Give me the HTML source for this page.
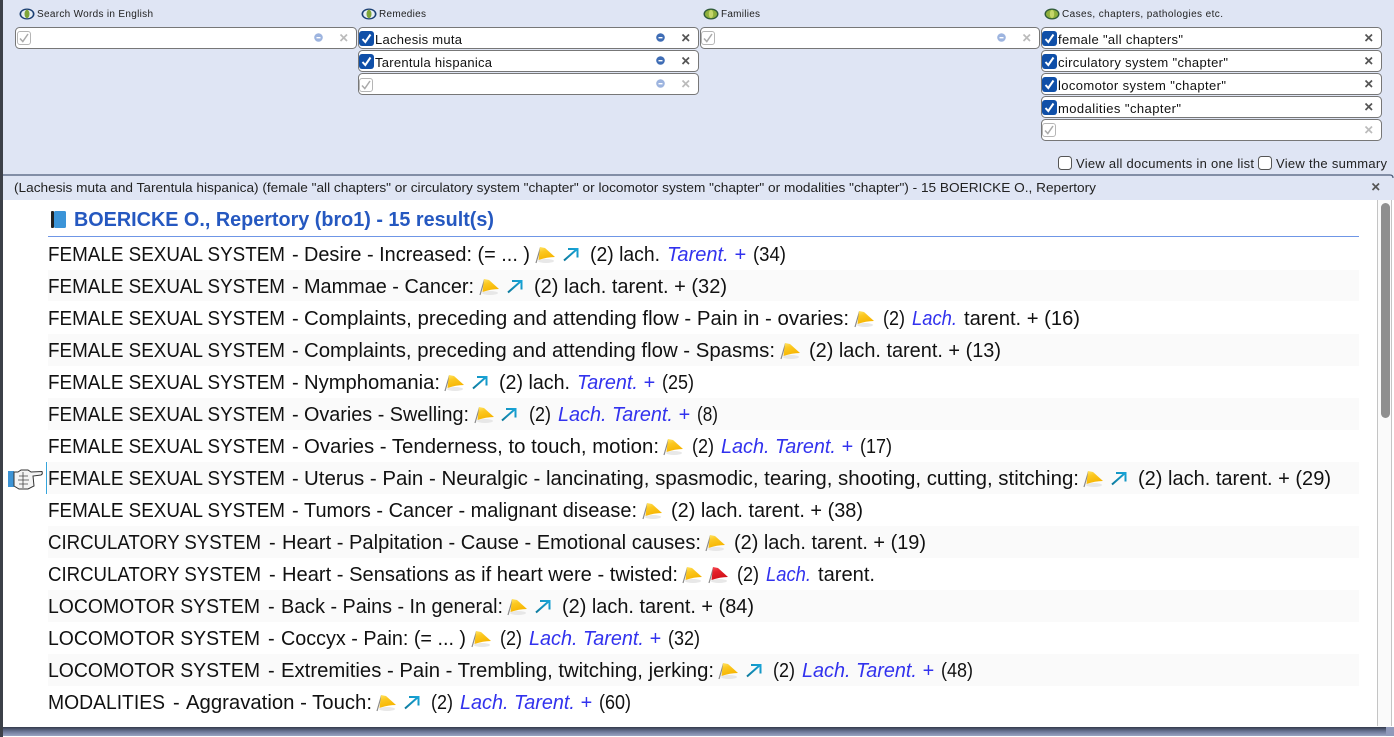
<!DOCTYPE html>
<html><head><meta charset="utf-8"><title>Search</title>
<style>
html,body{margin:0;padding:0;background:#fff;width:1394px;height:737px;overflow:hidden}
svg{display:block}
text{font-family:"Liberation Sans",sans-serif}
.r text{font-size:20px;fill:#111}
.r .b{fill:#3232ee;font-style:italic}
.l{font-size:10px;fill:#222}
.f{font-size:13px;fill:#111}
.ui{font-size:13px;fill:#222}
</style></head><body>
<svg width="1394" height="737" viewBox="0 0 1394 737" xmlns="http://www.w3.org/2000/svg">
<defs>
<linearGradient id="fy" x1="0" y1="0" x2=".4" y2="1"><stop offset="0" stop-color="#ffe468"/><stop offset=".4" stop-color="#fcc820"/><stop offset="1" stop-color="#f6b400"/></linearGradient>
<linearGradient id="fr" x1="0" y1="0" x2=".4" y2="1"><stop offset="0" stop-color="#f85058"/><stop offset=".4" stop-color="#e6202a"/><stop offset="1" stop-color="#cf1018"/></linearGradient>
<linearGradient id="ar" x1="0" y1="1" x2="1" y2="0"><stop offset="0" stop-color="#0d7a9c"/><stop offset="1" stop-color="#18a4d8"/></linearGradient>
<linearGradient id="bt" x1="0" y1="0" x2="0" y2="1"><stop offset="0" stop-color="#343a4c"/><stop offset=".5" stop-color="#6b7797"/><stop offset="1" stop-color="#9aa4c2"/></linearGradient>
<g id="flag"><ellipse cx="11" cy="15" rx="8" ry="2" fill="#e2e2e2" opacity=".8"/><path d="M1 17L5.500 1.500" stroke="#8a8a8a" stroke-width="1.200" fill="none"/><path d="M5 1L10 2L20 11Q12 11 3.500 14Z" fill="url(#fy)"/></g>
<g id="rflag"><ellipse cx="11" cy="15" rx="8" ry="2" fill="#e2e2e2" opacity=".8"/><path d="M1 17L5.500 1.500" stroke="#8a8a8a" stroke-width="1.200" fill="none"/><path d="M5 1L10 2L20 11Q12 11 3.500 14Z" fill="url(#fr)"/></g>
<g id="arrow"><path d="M1 14.500L13.500 3.500M5 3H14.500V11.500" stroke="url(#ar)" stroke-width="2" fill="none"/></g>
<g id="cb"><rect width="15" height="15" y="0" rx="3" fill="#0f4fa8"/><path d="M3.500 8L6.300 11L11.500 3.500" stroke="#fff" stroke-width="2" fill="none"/></g>
<g id="cg"><rect x=".5" y=".5" width="13" height="13" rx="2.500" fill="#fff" stroke="#b5b5b5"/><path d="M3 7.500L5.800 10.500L11 3" stroke="#aaa" stroke-width="1.500" fill="none"/></g>
<g id="dn"><circle cx="4.500" cy="4.500" r="4.300" fill="#3f6db5"/><rect x="2.500" y="4" width="4" height="1.400" fill="#fff"/></g>
<g id="dg"><circle cx="4.500" cy="4.500" r="4.300" fill="#9db4df"/><rect x="2.500" y="4" width="4" height="1.400" fill="#fff"/></g>
<g id="xn"><path d="M.5 .5L7 7M7 .5L.5 7" stroke="#555" stroke-width="1.700"/></g>
<g id="xg"><path d="M.5 .5L7 7M7 .5L.5 7" stroke="#bbb" stroke-width="1.700"/></g>
<g id="rb"><ellipse cx="8" cy="6" rx="7.500" ry="5.500" fill="#1b3f73"/><ellipse cx="8" cy="6" rx="5.800" ry="4.300" fill="#e8eef5"/><ellipse cx="8" cy="6" rx="2.500" ry="4.200" fill="#7fa53a"/></g>
<g id="gb"><ellipse cx="8" cy="6" rx="7.500" ry="5.500" fill="#2f5a3a"/><ellipse cx="8" cy="6" rx="6" ry="4.300" fill="#8fb03c"/><ellipse cx="8" cy="6" rx="2.200" ry="4" fill="#c5d66a"/></g>
</defs>

<!-- top panel -->
<rect width="1394" height="200" fill="#dfe5f4"/>
<rect x="0" width="3" height="737" fill="#3c4048"/>

<use href="#rb" x="19" y="8"/><text class="l" x="37" y="17" textLength="116" lengthAdjust="spacing">Search Words in English</text>
<use href="#rb" x="361" y="8"/><text class="l" x="379" y="17" textLength="47" lengthAdjust="spacing">Remedies</text>
<use href="#gb" x="703" y="8"/><text class="l" x="721" y="17" textLength="39" lengthAdjust="spacing">Families</text>
<use href="#gb" x="1044" y="8"/><text class="l" x="1062" y="17" textLength="161" lengthAdjust="spacing">Cases, chapters, pathologies etc.</text>

<g fill="#fff" stroke="#777" stroke-width="1">
<rect x="15.500" y="27.500" width="341" height="21" rx="4"/>
<rect x="358.500" y="27.500" width="340" height="21" rx="4"/>
<rect x="358.500" y="50.500" width="340" height="21" rx="4"/>
<rect x="358.500" y="73.500" width="340" height="21" rx="4"/>
<rect x="700.500" y="27.500" width="339" height="21" rx="4"/>
<rect x="1041.500" y="27.500" width="340" height="21" rx="4"/>
<rect x="1041.500" y="50.500" width="340" height="21" rx="4"/>
<rect x="1041.500" y="73.500" width="340" height="21" rx="4"/>
<rect x="1041.500" y="96.500" width="340" height="21" rx="4"/>
<rect x="1041.500" y="119.500" width="340" height="21" rx="4"/>
</g>

<use href="#cg" x="17" y="31"/><use href="#dg" x="314" y="33"/><use href="#xg" x="340" y="34"/>

<use href="#cb" x="359" y="31"/><text class="f" x="375" y="44" textLength="87" lengthAdjust="spacing">Lachesis muta</text><use href="#dn" x="656" y="33"/><use href="#xn" x="682" y="34"/>
<use href="#cb" x="359" y="54"/><text class="f" x="375" y="67" textLength="117" lengthAdjust="spacing">Tarentula hispanica</text><use href="#dn" x="656" y="56"/><use href="#xn" x="682" y="57"/>
<use href="#cg" x="359" y="78"/><use href="#dg" x="656" y="79"/><use href="#xg" x="682" y="80"/>

<use href="#cg" x="701" y="31"/><use href="#dg" x="997" y="33"/><use href="#xg" x="1023" y="34"/>

<use href="#cb" x="1042" y="31"/><text class="f" x="1058" y="44" textLength="125" lengthAdjust="spacing">female "all chapters"</text><use href="#xn" x="1365" y="34"/>
<use href="#cb" x="1042" y="54"/><text class="f" x="1058" y="67" textLength="170" lengthAdjust="spacing">circulatory system "chapter"</text><use href="#xn" x="1365" y="57"/>
<use href="#cb" x="1042" y="77"/><text class="f" x="1058" y="90" textLength="168" lengthAdjust="spacing">locomotor system "chapter"</text><use href="#xn" x="1365" y="80"/>
<use href="#cb" x="1042" y="100"/><text class="f" x="1058" y="113" textLength="123" lengthAdjust="spacing">modalities "chapter"</text><use href="#xn" x="1365" y="103"/>
<use href="#cg" x="1042" y="123"/><use href="#xg" x="1365" y="126"/>

<rect x="1058.500" y="156.500" width="13" height="13" rx="3" fill="#fff" stroke="#555"/>
<text class="ui" x="1076" y="168" textLength="178" lengthAdjust="spacing">View all documents in one list</text>
<rect x="1258.500" y="156.500" width="13" height="13" rx="3" fill="#fff" stroke="#555"/>
<text class="ui" x="1276" y="168" textLength="111" lengthAdjust="spacing">View the summary</text>

<!-- tab bar -->
<path d="M3 175H1390Q1393 175 1393 178" stroke="#4a5a78" stroke-width="1.200" fill="none"/>
<text x="14" y="192" font-size="13" fill="#222" textLength="1082" lengthAdjust="spacingAndGlyphs">(Lachesis muta and Tarentula hispanica) (female "all chapters" or circulatory system "chapter" or locomotor system "chapter" or modalities "chapter") - 15 BOERICKE O., Repertory</text>
<use href="#xn" x="1372" y="183"/>

<!-- content -->
<rect x="3" y="200" width="1391" height="527" fill="#fff"/>
<rect x="1377" y="200" width="15" height="527" fill="#fafafa"/>
<rect x="1377" y="200" width="1" height="526" fill="#c4c4c4"/>
<rect x="1391" y="200" width="1" height="526" fill="#c4c4c4"/>
<rect x="1381" y="203" width="9" height="215" rx="4.500" fill="#8f8f8f"/>
<rect x="0" y="727" width="1394" height="9" fill="url(#bt)"/>
<rect x="0" y="727" width="3" height="9" fill="#3c4048"/>
<rect x="1386" y="727" width="8" height="9" fill="#8f99ba"/>

<!-- book + title -->
<rect x="51" y="211" width="3" height="17" rx="1" fill="#222"/>
<rect x="54" y="211" width="12" height="17" rx="1.500" fill="#3b94d8"/>
<text x="74" y="226" font-size="20" font-weight="bold" fill="#2558c0" textLength="420" lengthAdjust="spacingAndGlyphs">BOERICKE O., Repertory (bro1) - 15 result(s)</text>
<rect x="48" y="236" width="1311" height="1" fill="#6f96e6"/>

<!-- stripes -->
<g fill="#fafafa">
<rect x="48" y="270" width="1311" height="31"/><rect x="48" y="334" width="1311" height="32"/>
<rect x="48" y="398" width="1311" height="32"/><rect x="48" y="462" width="1311" height="32"/>
<rect x="48" y="526" width="1311" height="32"/><rect x="48" y="590" width="1311" height="32"/>
<rect x="48" y="654" width="1311" height="32"/>
</g>

<!-- hand pointer -->
<rect x="46" y="462" width="1" height="32" fill="#35a5dc"/>
<rect x="8" y="471" width="6" height="16" fill="#3d94d6"/>
<path d="M14 472H18L21 470H28L31 472L42 471.500Q43 474 41 475L33 476L34 486L28 489H19L14 486Z" fill="#f4f4f4" stroke="#333" stroke-width="1"/>
<path d="M19 476H28M18 480H29M19 484H28M23 472V488" stroke="#444" stroke-width=".8" fill="none"/>

<g class="r">
<text x="48" y="261" textLength="237" lengthAdjust="spacingAndGlyphs">FEMALE SEXUAL SYSTEM</text><text x="292" y="261">-</text><text x="304" y="261" textLength="226" lengthAdjust="spacingAndGlyphs">Desire - Increased: (= ... )</text><use href="#flag" x="535" y="246"/><use href="#arrow" x="563" y="246"/><text x="590" y="261" textLength="70" lengthAdjust="spacingAndGlyphs">(2) lach.</text><text class="b" x="667" y="261" textLength="79" lengthAdjust="spacingAndGlyphs">Tarent. +</text><text x="753" y="261" textLength="33" lengthAdjust="spacingAndGlyphs">(34)</text>

<text x="48" y="293" textLength="237" lengthAdjust="spacingAndGlyphs">FEMALE SEXUAL SYSTEM</text><text x="292" y="293">-</text><text x="304" y="293" textLength="170" lengthAdjust="spacingAndGlyphs">Mammae - Cancer:</text><use href="#flag" x="479" y="278"/><use href="#arrow" x="507" y="278"/><text x="534" y="293" textLength="193" lengthAdjust="spacingAndGlyphs">(2) lach. tarent. + (32)</text>

<text x="48" y="325" textLength="237" lengthAdjust="spacingAndGlyphs">FEMALE SEXUAL SYSTEM</text><text x="292" y="325">-</text><text x="304" y="325" textLength="545" lengthAdjust="spacingAndGlyphs">Complaints, preceding and attending flow - Pain in - ovaries:</text><use href="#flag" x="854" y="310"/><text x="883" y="325" textLength="22" lengthAdjust="spacingAndGlyphs">(2)</text><text class="b" x="912" y="325" textLength="45" lengthAdjust="spacingAndGlyphs">Lach.</text><text x="964" y="325" textLength="116" lengthAdjust="spacingAndGlyphs">tarent. + (16)</text>

<text x="48" y="357" textLength="237" lengthAdjust="spacingAndGlyphs">FEMALE SEXUAL SYSTEM</text><text x="292" y="357">-</text><text x="304" y="357" textLength="471" lengthAdjust="spacingAndGlyphs">Complaints, preceding and attending flow - Spasms:</text><use href="#flag" x="780" y="342"/><text x="809" y="357" textLength="192" lengthAdjust="spacingAndGlyphs">(2) lach. tarent. + (13)</text>

<text x="48" y="389" textLength="237" lengthAdjust="spacingAndGlyphs">FEMALE SEXUAL SYSTEM</text><text x="292" y="389">-</text><text x="304" y="389" textLength="136" lengthAdjust="spacingAndGlyphs">Nymphomania:</text><use href="#flag" x="444" y="374"/><use href="#arrow" x="472" y="374"/><text x="499" y="389" textLength="71" lengthAdjust="spacingAndGlyphs">(2) lach.</text><text class="b" x="577" y="389" textLength="78" lengthAdjust="spacingAndGlyphs">Tarent. +</text><text x="662" y="389" textLength="32" lengthAdjust="spacingAndGlyphs">(25)</text>

<text x="48" y="421" textLength="237" lengthAdjust="spacingAndGlyphs">FEMALE SEXUAL SYSTEM</text><text x="292" y="421">-</text><text x="304" y="421" textLength="165" lengthAdjust="spacingAndGlyphs">Ovaries - Swelling:</text><use href="#flag" x="474" y="406"/><use href="#arrow" x="501" y="406"/><text x="529" y="421" textLength="22" lengthAdjust="spacingAndGlyphs">(2)</text><text class="b" x="558" y="421" textLength="132" lengthAdjust="spacingAndGlyphs">Lach. Tarent. +</text><text x="697" y="421" textLength="21" lengthAdjust="spacingAndGlyphs">(8)</text>

<text x="48" y="453" textLength="237" lengthAdjust="spacingAndGlyphs">FEMALE SEXUAL SYSTEM</text><text x="292" y="453">-</text><text x="304" y="453" textLength="355" lengthAdjust="spacingAndGlyphs">Ovaries - Tenderness, to touch, motion:</text><use href="#flag" x="663" y="438"/><text x="692" y="453" textLength="22" lengthAdjust="spacingAndGlyphs">(2)</text><text class="b" x="721" y="453" textLength="132" lengthAdjust="spacingAndGlyphs">Lach. Tarent. +</text><text x="860" y="453" textLength="32" lengthAdjust="spacingAndGlyphs">(17)</text>

<text x="48" y="485" textLength="237" lengthAdjust="spacingAndGlyphs">FEMALE SEXUAL SYSTEM</text><text x="292" y="485">-</text><text x="304" y="485" textLength="775" lengthAdjust="spacingAndGlyphs">Uterus - Pain - Neuralgic - lancinating, spasmodic, tearing, shooting, cutting, stitching:</text><use href="#flag" x="1083" y="470"/><use href="#arrow" x="1111" y="470"/><text x="1138" y="485" textLength="193" lengthAdjust="spacingAndGlyphs">(2) lach. tarent. + (29)</text>

<text x="48" y="517" textLength="237" lengthAdjust="spacingAndGlyphs">FEMALE SEXUAL SYSTEM</text><text x="292" y="517">-</text><text x="304" y="517" textLength="333" lengthAdjust="spacingAndGlyphs">Tumors - Cancer - malignant disease:</text><use href="#flag" x="642" y="502"/><text x="671" y="517" textLength="192" lengthAdjust="spacingAndGlyphs">(2) lach. tarent. + (38)</text>

<text x="48" y="549" textLength="213" lengthAdjust="spacingAndGlyphs">CIRCULATORY SYSTEM</text><text x="269" y="549">-</text><text x="282" y="549" textLength="419" lengthAdjust="spacingAndGlyphs">Heart - Palpitation - Cause - Emotional causes:</text><use href="#flag" x="705" y="534"/><text x="734" y="549" textLength="192" lengthAdjust="spacingAndGlyphs">(2) lach. tarent. + (19)</text>

<text x="48" y="581" textLength="213" lengthAdjust="spacingAndGlyphs">CIRCULATORY SYSTEM</text><text x="269" y="581">-</text><text x="282" y="581" textLength="396" lengthAdjust="spacingAndGlyphs">Heart - Sensations as if heart were - twisted:</text><use href="#flag" x="682" y="566"/><use href="#rflag" x="708" y="566"/><text x="737" y="581" textLength="22" lengthAdjust="spacingAndGlyphs">(2)</text><text class="b" x="766" y="581" textLength="45" lengthAdjust="spacingAndGlyphs">Lach.</text><text x="818" y="581" textLength="57" lengthAdjust="spacingAndGlyphs">tarent.</text>

<text x="48" y="613" textLength="212" lengthAdjust="spacingAndGlyphs">LOCOMOTOR SYSTEM</text><text x="268" y="613">-</text><text x="281" y="613" textLength="222" lengthAdjust="spacingAndGlyphs">Back - Pains - In general:</text><use href="#flag" x="507" y="598"/><use href="#arrow" x="535" y="598"/><text x="562" y="613" textLength="192" lengthAdjust="spacingAndGlyphs">(2) lach. tarent. + (84)</text>

<text x="48" y="645" textLength="212" lengthAdjust="spacingAndGlyphs">LOCOMOTOR SYSTEM</text><text x="268" y="645">-</text><text x="281" y="645" textLength="185" lengthAdjust="spacingAndGlyphs">Coccyx - Pain: (= ... )</text><use href="#flag" x="471" y="630"/><text x="500" y="645" textLength="22" lengthAdjust="spacingAndGlyphs">(2)</text><text class="b" x="529" y="645" textLength="132" lengthAdjust="spacingAndGlyphs">Lach. Tarent. +</text><text x="668" y="645" textLength="32" lengthAdjust="spacingAndGlyphs">(32)</text>

<text x="48" y="677" textLength="212" lengthAdjust="spacingAndGlyphs">LOCOMOTOR SYSTEM</text><text x="268" y="677">-</text><text x="281" y="677" textLength="433" lengthAdjust="spacingAndGlyphs">Extremities - Pain - Trembling, twitching, jerking:</text><use href="#flag" x="718" y="662"/><use href="#arrow" x="746" y="662"/><text x="773" y="677" textLength="22" lengthAdjust="spacingAndGlyphs">(2)</text><text class="b" x="802" y="677" textLength="132" lengthAdjust="spacingAndGlyphs">Lach. Tarent. +</text><text x="941" y="677" textLength="32" lengthAdjust="spacingAndGlyphs">(48)</text>

<text x="48" y="709" textLength="117" lengthAdjust="spacingAndGlyphs">MODALITIES</text><text x="173" y="709">-</text><text x="186" y="709" textLength="186" lengthAdjust="spacingAndGlyphs">Aggravation - Touch:</text><use href="#flag" x="376" y="694"/><use href="#arrow" x="404" y="694"/><text x="431" y="709" textLength="22" lengthAdjust="spacingAndGlyphs">(2)</text><text class="b" x="460" y="709" textLength="132" lengthAdjust="spacingAndGlyphs">Lach. Tarent. +</text><text x="599" y="709" textLength="32" lengthAdjust="spacingAndGlyphs">(60)</text>
</g>
</svg>
</body></html>
